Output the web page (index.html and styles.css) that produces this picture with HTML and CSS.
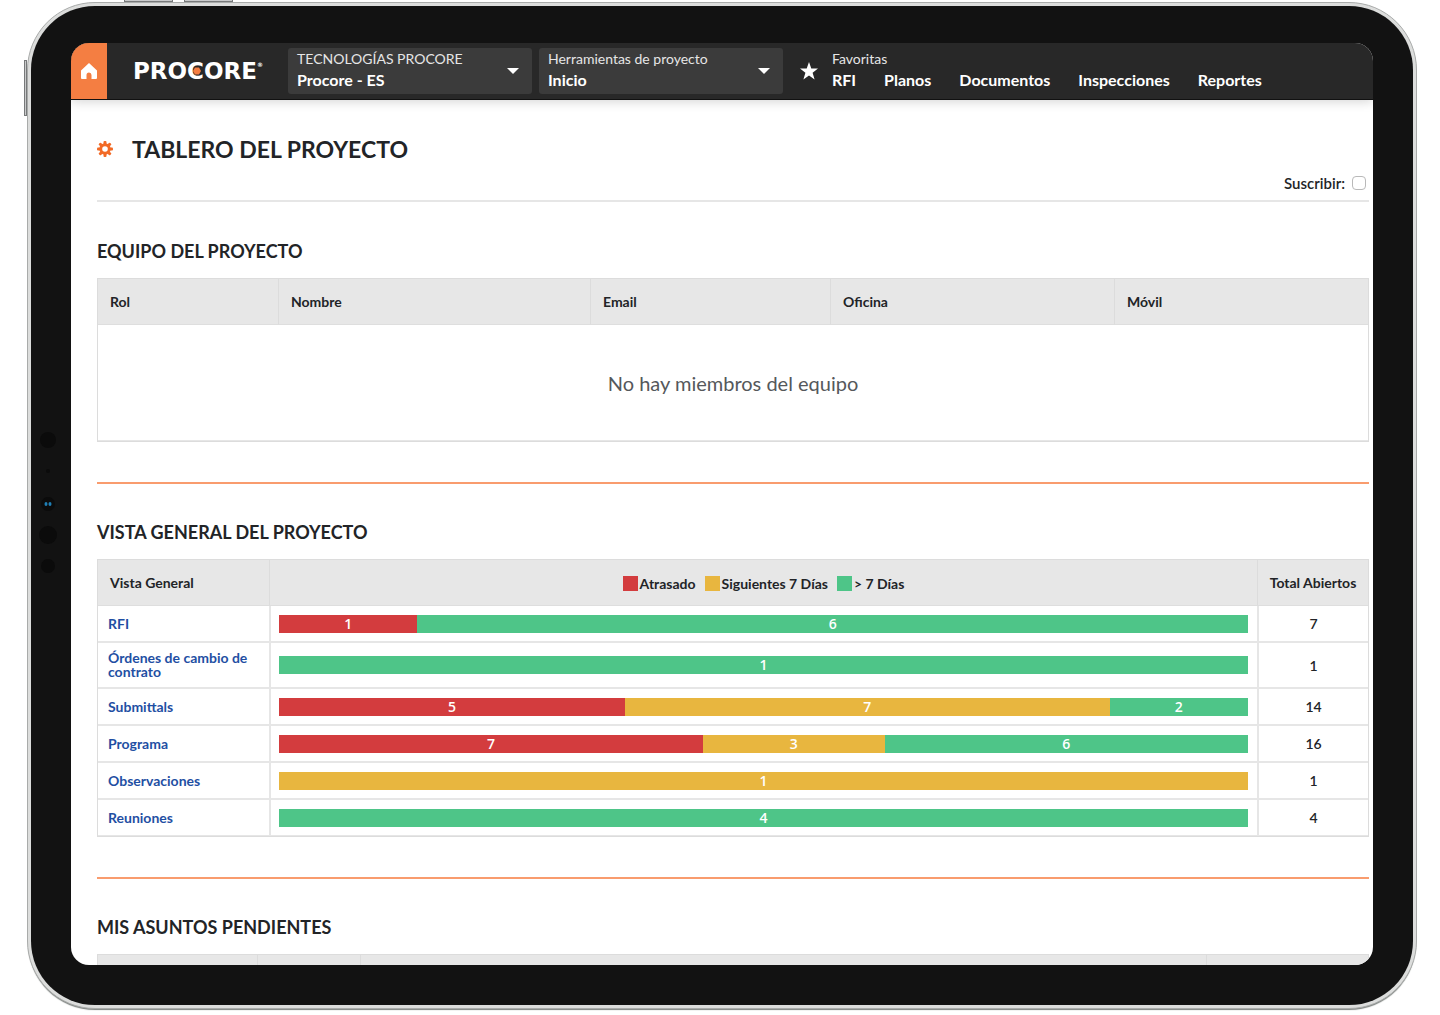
FILE: index.html
```html
<!DOCTYPE html>
<html lang="es">
<head>
<meta charset="utf-8">
<meta name="viewport" content="width=device-width, initial-scale=1">
<title>Tablero del proyecto</title>
<link rel="stylesheet" href="styles.css">
</head>
<body>
<div class="device">
  <span class="key key-up"></span>
  <span class="key key-down"></span>
  <span class="key key-side"></span>
  <div class="bezel">
    <svg class="sensors" width="20" height="146" viewBox="0 0 20 146" aria-hidden="true">
      <g fill="#0b0b0b">
        <circle cx="10" cy="9" r="8"/>
        <circle cx="10" cy="40" r="2"/>
        <circle cx="10" cy="73" r="7"/>
        <circle cx="10" cy="104" r="9"/>
        <circle cx="10" cy="135" r="7"/>
      </g>
      <ellipse cx="8" cy="73" rx="1.5" ry="2" fill="#1f7fb5"/>
      <ellipse cx="12" cy="73" rx="1.5" ry="2" fill="#1f7fb5"/>
    </svg>
    <div class="screen">
      <header class="topbar">
        <a class="home" href="#" aria-label="Inicio">
          <svg width="18" height="18" viewBox="0 0 18 18" aria-hidden="true"><path d="M9 1 1 8.500V16a1 1 0 0 0 1 1h4.500v-4a2.500 2.500 0 0 1 5 0v4H16a1 1 0 0 0 1-1V8.500z" fill="#fff"/></svg>
        </a>
        <a class="logo" href="#"><span class="logo-word">PROCORE</span><span class="logo-mark">®</span>
          <svg class="logo-hex" width="8" height="8" viewBox="0 0 8 8" aria-hidden="true"><path d="M2 .5h4L8 4 6 7.500H2L0 4z" fill="#f47e42"/></svg>
        </a>
        <label class="picker">
          <span class="picker-text">
            <span class="picker-label">TECNOLOGÍAS PROCORE</span>
            <select class="picker-value"><option>Procore - ES</option></select>
          </span>
          <svg width="12" height="6" viewBox="0 0 12 6" aria-hidden="true"><path d="M0 0h12L6 6z" fill="#fff"/></svg>
        </label>
        <label class="picker">
          <span class="picker-text">
            <span class="picker-label">Herramientas de proyecto</span>
            <select class="picker-value"><option>Inicio</option></select>
          </span>
          <svg width="12" height="6" viewBox="0 0 12 6" aria-hidden="true"><path d="M0 0h12L6 6z" fill="#fff"/></svg>
        </label>
        <svg class="star" width="18" height="18" viewBox="0 0 18 18" aria-hidden="true"><path d="m9 0 2.300 6.500H18l-5.400 4.200 2 6.800L9 13.400l-5.600 4.100 2-6.800L0 6.500h6.700z" fill="#fff"/></svg>
        <div class="favorites">
          <span class="picker-label">Favoritas</span>
          <nav class="fav-links">
            <a href="#">RFI</a>
            <a href="#">Planos</a>
            <a href="#">Documentos</a>
            <a href="#">Inspecciones</a>
            <a href="#">Reportes</a>
          </nav>
        </div>
      </header>
      <main class="content">
        <div class="page-head">
          <div class="title-row">
            <svg width="16" height="16" viewBox="-8 -8 16 16" aria-hidden="true">
              <g fill="#f26a26">
                <rect x="-1.500" y="-8" width="3" height="16" rx="1"/>
                <rect x="-1.500" y="-8" width="3" height="16" rx="1" transform="rotate(45)"/>
                <rect x="-1.500" y="-8" width="3" height="16" rx="1" transform="rotate(90)"/>
                <rect x="-1.500" y="-8" width="3" height="16" rx="1" transform="rotate(135)"/>
                <circle r="5.700"/>
              </g>
              <circle r="2.800" fill="#fff"/>
            </svg>
            <h1>TABLERO DEL PROYECTO</h1>
          </div>
          <label class="subscribe">Suscribir: <input type="checkbox"></label>
        </div>

        <section class="block">
          <h2>EQUIPO DEL PROYECTO</h2>
          <table class="grid team">
            <colgroup><col class="c-role"><col class="c-name"><col class="c-mail"><col class="c-office"><col></colgroup>
            <thead><tr><th>Rol</th><th>Nombre</th><th>Email</th><th>Oficina</th><th>Móvil</th></tr></thead>
            <tbody><tr><td class="empty" colspan="5">No hay miembros del equipo</td></tr></tbody>
          </table>
        </section>

        <section class="block">
          <h2>VISTA GENERAL DEL PROYECTO</h2>
          <table class="grid overview">
            <colgroup><col class="c-item"><col><col class="c-total"></colgroup>
            <thead>
              <tr>
                <th>Vista General</th>
                <th>
                  <div class="legend">
                    <span class="key-item"><i class="swatch late"></i>Atrasado</span>
                    <span class="key-item"><i class="swatch soon"></i>Siguientes 7 Días</span>
                    <span class="key-item"><i class="swatch later"></i>&gt; 7 Días</span>
                  </div>
                </th>
                <th class="total">Total Abiertos</th>
              </tr>
            </thead>
            <tbody>
              <tr><td><a href="#">RFI</a></td><td><div class="bar"><span class="late" style="flex-grow:1">1</span><span class="later" style="flex-grow:6">6</span></div></td><td class="total">7</td></tr>
              <tr class="tall"><td><a href="#">Órdenes de cambio de contrato</a></td><td><div class="bar"><span class="later" style="flex-grow:1">1</span></div></td><td class="total">1</td></tr>
              <tr><td><a href="#">Submittals</a></td><td><div class="bar"><span class="late" style="flex-grow:5">5</span><span class="soon" style="flex-grow:7">7</span><span class="later" style="flex-grow:2">2</span></div></td><td class="total">14</td></tr>
              <tr><td><a href="#">Programa</a></td><td><div class="bar"><span class="late" style="flex-grow:7">7</span><span class="soon" style="flex-grow:3">3</span><span class="later" style="flex-grow:6">6</span></div></td><td class="total">16</td></tr>
              <tr><td><a href="#">Observaciones</a></td><td><div class="bar"><span class="soon" style="flex-grow:1">1</span></div></td><td class="total">1</td></tr>
              <tr><td><a href="#">Reuniones</a></td><td><div class="bar"><span class="later" style="flex-grow:4">4</span></div></td><td class="total">4</td></tr>
            </tbody>
          </table>
        </section>

        <section class="block">
          <h2>MIS ASUNTOS PENDIENTES</h2>
          <table class="grid pending">
            <colgroup><col class="c-p1"><col class="c-p2"><col><col class="c-p4"></colgroup>
            <thead><tr><th></th><th></th><th></th><th></th></tr></thead>
          </table>
        </section>
      </main>
    </div>
  </div>
</div>
</body>
</html>
```
FILE: styles.css
```css
* { box-sizing: border-box; }

body {
  margin: 0;
  height: 100vh;
  padding: 2px 23px 6px 27px;
  background: #fff;
  color: #222427;
  font-family: Lato, "Open Sans", sans-serif;
  font-size: 14px;
  overflow: hidden;
}

a { color: inherit; text-decoration: none; }

/* Tablet body */
.device {
  position: relative;
  height: 100%;
  padding: 3px;
  border: 1px solid #a9abaa;
  border-radius: 68px;
  background: #dcdddc;
  box-shadow: 0 2px 1px -1px #7d827f;
}

.key { position: absolute; background: #c9cacb; border: 1px solid #77797a; }
.key-up, .key-down { top: -5px; width: 49px; height: 4px; }
.key-up { left: 96px; }
.key-down { left: 156px; }
.key-side { left: -4px; top: 57px; width: 3px; height: 56px; }

.bezel {
  display: flex;
  align-items: center;
  height: 100%;
  padding: 37px 40px 40px 7px;
  border-radius: 64px;
  background: #121212;
}

.sensors { flex: none; margin-right: 13px; }

.screen {
  flex: 1;
  min-width: 0;
  height: 100%;
  overflow: hidden;
  border-radius: 18px;
  background: #fff;
}

/* Top bar */
.topbar {
  display: flex;
  align-items: center;
  height: 57px;
  background: #282828;
  border-bottom: 1px solid #111;
  box-shadow: 0 2px 10px rgba(0, 0, 0, .16);
  color: #fff;
}

.home {
  display: flex;
  align-items: center;
  justify-content: center;
  align-self: stretch;
  width: 36px;
  background: #f47e42;
}

.logo {
  position: relative;
  display: flex;
  align-items: flex-start;
  width: 155px;
  margin-left: 26px;
  font-family: "DejaVu Sans", sans-serif;
  font-weight: 700;
}
.logo-word { font-size: 23px; line-height: 26px; }
.logo-mark { font-size: 6px; line-height: 14px; }
.logo-hex { position: absolute; left: 60px; top: 9px; }

.picker {
  display: flex;
  align-items: center;
  width: 244px;
  height: 46px;
  margin-right: 7px;
  padding: 0 13px 0 9px;
  border-radius: 3px;
  background: #3b3b3b;
}
.picker-text, .favorites { display: flex; flex-direction: column; padding-bottom: 4px; }
.picker-text { flex: 1; }
.picker-label { font-size: 14px; line-height: 20px; color: #e6e6e6; }
.picker-value {
  appearance: none;
  height: 21px;
  padding: 0;
  border: 0;
  background: none;
  color: #fff;
  font: 700 16px/21px Lato, sans-serif;
}

.star { margin: 0 14px 0 10px; }
.fav-links { display: flex; gap: 28px; font-size: 16px; font-weight: 700; line-height: 21px; }

/* Page */
.content { padding: 0 4px 0 26px; }

.page-head {
  display: flex;
  flex-direction: column;
  height: 102px;
  padding-top: 33px;
  border-bottom: 2px solid #e6e6e6;
}
.title-row { display: flex; align-items: center; gap: 19px; }
h1 { margin: 0; font-size: 23px; font-weight: 700; line-height: 32px; }

.subscribe {
  display: flex;
  align-items: center;
  align-self: flex-end;
  gap: 7px;
  margin-right: 3px;
  font-size: 15px;
  font-weight: 600;
  line-height: 36px;
}
.subscribe input {
  appearance: none;
  width: 14px;
  height: 14px;
  margin: 0;
  border: 1px solid #b9b9b9;
  border-radius: 4px;
  background: #fff;
}

.block { padding: 35px 0 40px; }
.block + .block { padding-top: 34px; border-top: 2px solid #f99c6e; }
h2 { margin: 0 0 13px; font-size: 18px; font-weight: 700; line-height: 28px; }

.grid {
  width: 100%;
  table-layout: fixed;
  border-collapse: separate;
  border-spacing: 0;
  border: 1px solid #dcdcdc;
}
.grid th {
  height: 46px;
  padding: 0 12px;
  border-bottom: 1px solid #dedede;
  background: #e7e7e7;
  font-weight: 700;
  text-align: left;
}
.grid th + th { border-left: 1px solid #dcdcdc; }
.grid td { padding: 0 10px; border-bottom: 2px solid #e6e6e6; }
.grid td + td { padding: 0 9px 0 8px; border-left: 2px solid #e6e6e6; }
.grid tr:last-child td { border-bottom-width: 1px; }

.team .empty { height: 116px; color: #55585b; font-size: 20px; text-align: center; }
.c-role { width: 180px; }
.c-name { width: 312px; }
.c-mail { width: 240px; }
.c-office { width: 284px; }

.overview td { height: 37px; }
.overview .tall td { height: 46px; }
.overview tr:last-child td { height: 36px; }
.overview td a { display: block; color: #1f4fa3; font-weight: 700; line-height: 14px; }
.c-item { width: 171px; }
.c-total { width: 111px; }
.overview .total { padding: 0; text-align: center; font-weight: 600; }
.overview th.total { font-weight: 700; }

.legend { display: flex; justify-content: center; gap: 9px; padding-top: 2px; }
.key-item { display: flex; align-items: center; gap: 2px; }
.swatch { width: 15px; height: 15px; }

.bar { display: flex; height: 18px; color: #fff; font: 600 14px/18px "Open Sans", sans-serif; text-align: center; }
.bar span { flex-basis: 0; }
.late { background: #d33c3e; }
.soon { background: #e8b63f; }
.later { background: #4ec588; }

.c-p1 { width: 159px; }
.c-p2 { width: 103px; }
.c-p4 { width: 162px; }
```
